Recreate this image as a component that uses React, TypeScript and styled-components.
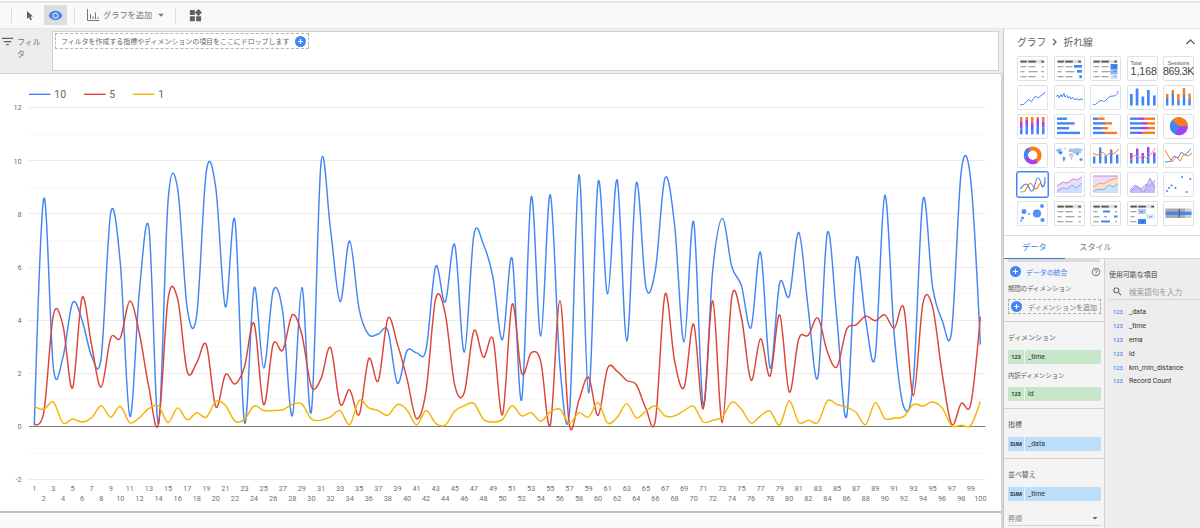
import { ReactNode } from "react";
import styled, { createGlobalStyle } from "styled-components";
import {
  MdArrowDropDown,
  MdFilterList,
  MdHelpOutline,
  MdRemoveRedEye,
  MdSearch,
  MdWidgets,
} from "react-icons/md";

const BLUE = "#4285f4";
const RED = "#db4437";
const YELLOW = "#f4b400";
const ORANGE = "#fa7b17";
const PURPLE = "#a142f4";

const GlobalStyle = createGlobalStyle`
  * {
    box-sizing: border-box;
  }
  body {
    margin: 0;
    background: #fafafa;
    font-family: Roboto, "Noto Sans CJK JP", sans-serif;
    color: #666;
    overflow: hidden;
  }
  svg {
    display: block;
  }
`;

const Page = styled.div`
  width: 1200px;
  height: 528px;
  display: flex;
  flex-direction: column;
  overflow: hidden;
`;

const Toolbar = styled.header`
  flex: none;
  height: 29px;
  padding-left: 11px;
  display: flex;
  align-items: center;
  background: #f9f9f9;
  border-bottom: 1px solid #e6e6e6;
  box-shadow: inset 0 1px #fff, inset 0 3px #e4e4e4;
`;

const ToolbarLine = styled.div`
  width: 1px;
  height: 15px;
  margin-top: 2px;
  background: #dcdcdc;
`;

const ToolButton = styled.div<{ $active?: boolean; $width: number; $left?: number }>`
  width: ${({ $width }) => $width}px;
  height: 20px;
  margin: 2px 0 0 ${({ $left }) => $left ?? 0}px;
  display: flex;
  align-items: center;
  justify-content: center;
  color: #616161;
  background: ${({ $active }) => ($active ? "#dedede" : "transparent")};
`;

const AddChart = styled.div`
  display: flex;
  align-items: center;
  width: 94px;
  margin-top: 2px;
  padding-left: 6px;
  color: #757575;
  font-size: 8.2px;
  white-space: nowrap;

  span {
    margin: -2px 2px 0 4px;
  }
`;

const Workspace = styled.div`
  flex: 1;
  min-height: 0;
  display: flex;
`;

const Canvas = styled.main`
  width: 1003px;
  flex: none;
  display: flex;
  flex-direction: column;
  background: linear-gradient(to right, transparent 1001px, #d6d6d6 1001px);
`;

const FilterBar = styled.div`
  flex: none;
  height: 45px;
  display: flex;
  padding: 2px 4px 2px 0;
  background: #ededed;
  border-bottom: 1px solid #d2d2d2;
`;

const FilterLabel = styled.div`
  width: 52px;
  display: flex;
  gap: 1px;
  padding-top: 4px;
  font-size: 8px;
  line-height: 12.4px;
  color: #757575;

  svg {
    flex: none;
    margin-top: -1px;
  }
  span {
    width: 26px;
    margin: 2px 0 0 1px;
    word-break: break-all;
  }
`;

const FilterArea = styled.div`
  flex: 1;
  background: #fff;
  border: 1px solid #d0d0d0;
  padding: 1px 2px;
`;

const DropZone = styled.div`
  width: 254px;
  height: 16px;
  padding: 0 2px 0 5px;
  display: flex;
  align-items: center;
  justify-content: space-between;
  border: 1px dashed #b4b4b4;
  font-size: 6.94px;
  color: #666;
  white-space: nowrap;
`;

const Sheet = styled.section`
  flex: none;
  height: 438px;
  margin: 1px 2px 0 0;
  background: #fff;
  border-bottom: 2px solid #c2c2c2;
`;

const Panel = styled.aside`
  flex: 1;
  min-width: 0;
  display: flex;
  flex-direction: column;
  background: #fff;
  border-left: 1px solid #c4c4c4;
`;

const PanelHeader = styled.div`
  flex: none;
  height: 27px;
  display: flex;
  align-items: center;
  gap: 6px;
  padding: 0 4px 2px 13px;
  font-size: 9.8px;
  color: #616161;

  svg:last-child {
    margin-left: auto;
  }
`;

const ChartPicker = styled.div`
  flex: none;
  height: 180px;
  display: grid;
  grid-template-columns: repeat(5, 31px);
  grid-auto-rows: 25px;
  column-gap: 5.5px;
  row-gap: 4.1px;
  padding-left: 13px;
  border-bottom: 1px solid #dcdcdc;
`;

const Tile = styled.div<{ $selected?: boolean }>`
  overflow: hidden;
  border-radius: 2px;
  box-shadow: ${({ $selected }) =>
    $selected ? `0 0 0 1px ${BLUE}, inset 0 0 0 0.5px ${BLUE}` : "inset 0 0 0 1px #dfe1e5"};
`;

const ScoreTile = styled(Tile)<{ $wide?: boolean }>`
  display: flex;
  flex-direction: column;
  align-items: ${({ $wide }) => ($wide ? "center" : "flex-start")};
  padding: 4px 0 0 ${({ $wide }) => ($wide ? 0 : 4)}px;
  font-family: "Liberation Sans", sans-serif;
  color: #555;
  white-space: nowrap;

  small {
    font-size: 5.3px;
    line-height: 6px;
  }
  b {
    font-size: 10.6px;
    line-height: 10px;
    font-weight: 400;
    letter-spacing: ${({ $wide }) => ($wide ? -0.45 : 0)}px;
    color: #444;
  }
`;

const Tabs = styled.div`
  flex: none;
  height: 23px;
  display: flex;
  border-bottom: 1px solid #d6d6d6;
`;

const Tab = styled.div<{ $active?: boolean }>`
  width: 61px;
  height: 23px;
  padding-bottom: 2px;
  display: flex;
  align-items: center;
  justify-content: center;
  font-size: 8.1px;
  color: ${({ $active }) => ($active ? "#3b78e7" : "#757575")};
  border-bottom: 1.5px solid ${({ $active }) => ($active ? "#3b78e7" : "transparent")};
`;

const PanelBody = styled.div`
  flex: 1;
  min-height: 0;
  display: flex;
`;

const Config = styled.div`
  width: 101px;
  flex: none;
  background: #f4f4f4;
  border-right: 1px solid #d2d2d2;
  overflow: hidden;
`;

const ClippedChip = styled.div`
  height: 3px;
  margin: 0 4px;
  background: #e0dbd9;
`;

const Section = styled.div<{ $height: number; $last?: boolean }>`
  height: ${({ $height }) => $height}px;
  padding: 0 3px 0 4px;
  border-bottom: ${({ $last }) => ($last ? "none" : "1px solid #d0d0d0")};
`;

const Label = styled.div<{ $height: number; $size?: number; $gap?: number }>`
  height: ${({ $height }) => $height}px;
  padding-bottom: ${({ $gap }) => $gap ?? 7}px;
  display: flex;
  align-items: flex-end;
  font-size: ${({ $size }) => $size ?? 6.9}px;
  line-height: 10px;
  color: #5c5c5c;
  white-space: nowrap;
`;

const BlendRow = styled.div`
  height: 19px;
  display: flex;
  align-items: center;
  gap: 5px;
  padding-left: 2px;
  font-size: 6.9px;
  color: #3b78e7;
  white-space: nowrap;

  > svg:last-child {
    margin-left: auto;
  }
`;

const AddDimension = styled.div`
  height: 15px;
  display: flex;
  align-items: center;
  gap: 6px;
  padding-left: 2px;
  border: 1px dashed #b0b0b0;
  font-size: 6.95px;
  color: #7a7a7a;
  white-space: nowrap;
`;

const FieldChip = styled.div<{ $color: string }>`
  height: 14px;
  display: flex;
  align-items: center;
  border-radius: 1px;
  background: ${({ $color }) => $color};
  color: #333;
  font-size: 7px;

  b {
    width: 17px;
    height: 14px;
    line-height: 14px;
    text-align: center;
    font-size: 5.6px;
    border-right: 1px solid #f4f4f4;
    margin-right: 3px;
  }
`;

const SelectRow = styled.div`
  height: 24px;
  margin: 0 3px 0 4px;
  padding-top: 8px;
  display: flex;
  justify-content: space-between;
  align-items: center;
  font-size: 7px;
  color: #888;
  border-bottom: 1px solid #d4d4d4;
`;

const Fields = styled.div`
  flex: 1;
  min-width: 0;
  background: #ededed;
  padding: 10px 0 0 4px;
`;

const FieldsTitle = styled.div`
  height: 12px;
  line-height: 12px;
  font-size: 6.95px;
  font-weight: 500;
  color: #666;
`;

const SearchBox = styled.div`
  height: 19px;
  display: flex;
  align-items: center;
  gap: 6px;
  padding: 3px 0 0 3px;
  border-bottom: 1px solid #d4d4d4;
  font-size: 7.6px;
  color: #9a9a9a;
  white-space: nowrap;
`;

const FieldList = styled.div`
  padding-top: 5px;
`;

const FieldRow = styled.div`
  height: 13.9px;
  display: flex;
  align-items: center;
  padding-left: 4px;
  font-size: 7px;
  color: #333;

  b {
    width: 16px;
    font-size: 5.7px;
    font-weight: 500;
    color: ${BLUE};
  }
`;

const AxisText = styled.text`
  font-size: 7.3px;
  fill: #707070;
`;

const LegendText = styled.text`
  font-size: 10.4px;
  fill: #666;
`;

const series = [
  {
    name: "10",
    color: BLUE,
    legendX: 29,
    values: [
      0.05, 8.58, 2.2, 2.6, 4.65, 4.0, 2.65, 2.6, 8.05, 6.15, 0.38, 5.1, 7.45, 0.1, 8.5, 8.95, 4.45, 4.2, 9.6, 8.95,
      4.5, 7.75, 0.15, 5.22, 2.2, 5.1, 4.3, 0.4, 5.23, 0.57, 9.9, 7.4, 4.7, 6.98, 4.4, 3.45, 3.48, 3.6, 1.63, 2.85,
      2.77, 2.9, 6.02, 4.68, 6.84, 2.8, 7.2, 6.85, 5.6, 3.27, 6.33, 1.0, 8.63, 3.4, 8.72, 2.3, 0.5, 9.47, 1.27, 9.2,
      4.98, 9.27, 3.22, 9.17, 5.25, 5.9, 9.35, 7.6, 3.18, 7.7, 0.8, 5.9, 7.83, 6.0, 5.3, 3.72, 6.55, 2.2, 5.4, 4.9,
      7.3, 4.4, 1.85, 7.3, 4.0, 0.37, 6.3, 4.0, 2.65, 8.7, 3.4, 0.72, 1.75, 8.55, 5.25, 4.0, 3.6, 9.6, 9.25, 3.08,
    ],
  },
  {
    name: "5",
    color: RED,
    legendX: 84,
    values: [
      0.1, 0.55, 4.2, 3.8, 1.45, 4.85, 3.05, 1.48, 3.33, 3.33, 4.72, 3.5, 1.45, 0.1, 4.8, 4.8, 2.07, 2.4, 3.07, 0.74,
      1.95, 1.6, 2.25, 3.88, 0.82, 3.1, 2.87, 4.2, 3.45, 1.5, 1.8, 2.97, 0.85, 1.38, 0.45, 2.55, 1.72, 4.07, 3.1, 1.8,
      0.3, 1.35, 4.8, 4.25, 1.55, 1.28, 3.6, 2.6, 3.3, 0.45, 4.6, 2.0, 2.77, 2.45, 0.05, 4.73, 0.05, 1.0, 1.85, 0.42,
      2.2, 2.07, 1.73, 1.57, 0.68, 0.25, 4.97, 2.48, 1.47, 3.85, 0.67, 4.73, 0.15, 4.9, 4.1, 1.74, 3.3, 1.9, 4.2, 1.3,
      3.3, 3.43, 4.08, 2.8, 2.25, 3.65, 3.82, 4.15, 3.98, 4.2, 3.7, 4.45, 1.17, 4.65, 4.5, 2.0, 0.08, 0.87, 0.85, 4.13,
    ],
  },
  {
    name: "1",
    color: YELLOW,
    legendX: 133,
    values: [
      0.77, 0.65, 0.92, 0.13, 0.28, 0.17, 0.33, 0.78, 0.35, 0.76, 0.14, 0.33, 0.68, 0.77, 0.15, 0.7, 0.25, 0.52, 0.35, 0.95,
      0.8, 0.2, 0.27, 0.77, 0.6, 0.6, 0.63, 0.83, 0.85, 0.28, 0.24, 0.36, 0.6, 0.07, 0.98, 0.7, 0.6, 0.42, 0.83, 0.62,
      0.06, 0.6, 0.12, 0.05, 0.58, 0.78, 0.87, 0.27, 0.17, 0.27, 0.78, 0.4, 0.52, 0.2, 0.55, 0.65, 0.12, 0.52, 0.35, 0.9,
      0.13, 0.35, 0.86, 0.33, 0.58, 0.77, 0.4, 0.4, 0.6, 0.76, 0.17, 0.24, 0.35, 0.92, 0.65, 0.13, 0.4, 0.58, 0.05, 0.97,
      0.15, 0.24, 0.15, 0.97, 0.83, 0.73, 0.53, 0.07, 0.9, 0.3, 0.32, 0.38, 0.83, 0.77, 0.92, 0.7, 0.03, 0.05, 0.05, 0.94,
    ],
  },
];

const chartX = (index: number) => 34.3 + index * 9.556;
const chartY = (value: number) => 351.5 - value * 26.58;

// cubic segments whose tangent at a point is parallel to its two neighbours
const smoothPath = (values: number[]) => {
  const last = values.length - 1;
  const slope = (i: number) =>
    i === 0 || i === last ? 0 : (chartY(values[i + 1]) - chartY(values[i - 1])) / 6;
  const handle = (i: number) => (i === 0 || i === last ? 0 : 9.556 / 3);

  return values.reduce((path, value, i) => {
    const x = chartX(i);
    const y = chartY(value);
    if (i === 0) return `M${x},${y}`;
    const c1 = `${chartX(i - 1) + handle(i - 1)},${chartY(values[i - 1]) + slope(i - 1)}`;
    const c2 = `${x - handle(i)},${y - slope(i)}`;
    return `${path}C${c1} ${c2} ${x},${y}`;
  }, "");
};

const gridValues = Array.from({ length: 15 }, (_, i) => 12 - i);

const LineChart = () => (
  <svg width="1001" height="436" viewBox="0 0 1001 436">
    {series.map(({ name, color, legendX }) => (
      <g key={name}>
        <line x1={legendX} x2={legendX + 21.5} y1={19.3} y2={19.3} stroke={color} strokeWidth={1.4} />
        <LegendText x={legendX + 25.3} y={22.9}>
          {name}
        </LegendText>
      </g>
    ))}
    {gridValues.map((value) => (
      <g key={value}>
        <line
          x1={29}
          x2={985.5}
          y1={Math.round(chartY(value) - 0.5) + 0.5}
          y2={Math.round(chartY(value) - 0.5) + 0.5}
          stroke={value === 0 ? "#7d7d7d" : value % 2 ? "#f8f8f8" : "#ebebeb"}
        />
        {value % 2 === 0 && (
          <AxisText x={21.7} y={chartY(value) + 2.8} textAnchor="end">
            {value}
          </AxisText>
        )}
      </g>
    ))}
    {series.map(({ name, color, values }) => (
      <path key={name} d={smoothPath(values)} fill="none" stroke={color} strokeWidth={1.45} />
    ))}
    {series[0].values.map((_, i) => (
      <AxisText key={i} x={chartX(i)} y={i % 2 ? 426 : 416} textAnchor="middle">
        {i + 1}
      </AxisText>
    ))}
  </svg>
);

const PlusIcon = ({ size = 11 }: { size?: number }) => (
  <svg width={size} height={size} viewBox="0 0 11 11">
    <circle cx="5.5" cy="5.5" r="5.5" fill={BLUE} />
    <path d="M5.5 3v5M3 5.5h5" stroke="#fff" strokeWidth="1.1" />
  </svg>
);

const Thumb = ({ children }: { children: ReactNode }) => (
  <svg width="31" height="25" viewBox="0 0 31 25" fill="none" strokeWidth="1">
    {children}
  </svg>
);

type Bar = [x: number, y: number, width: number, height: number, color: string];

const Bars = ({ items }: { items: Bar[] }) => (
  <>
    {items.map(([x, y, width, height, color], i) => (
      <rect key={i} x={x} y={y} width={width} height={height} fill={color} />
    ))}
  </>
);

const GREY = "#a6a6a6";
const tableHead: Bar[] = [
  [3, 3.7, 24.5, 3.6, "#e2e2e2"],
  [3.5, 4.7, 6.3, 1.8, "#555"],
  [11.3, 4.7, 7.5, 1.8, "#555"],
  [24.3, 4.7, 2.7, 1.8, "#555"],
];
const tableRows: Bar[] = [10, 15, 20].flatMap((y, i): Bar[] => [
  [3.5, y, i === 1 ? 4 : 6, 1.3, GREY],
  [11.5, y, i === 1 ? 9 : 7, 1.3, GREY],
]);
const rowEnds: Bar[] = [
  [24.8, 10, 2, 1.3, GREY],
  [24, 15, 3, 1.3, GREY],
  [24.8, 20, 2, 1.3, GREY],
];

const stackedColumns: Bar[] = [0, 1, 2, 3, 4].flatMap((i): Bar[] => {
  const top = [7.5, 6, 8.5, 5, 7.5][i];
  const split = [14.5, 12, 15, 11, 13.5][i];
  return [
    [3 + i * 5.5, 3, 2.5, top - 3, ORANGE],
    [3 + i * 5.5, top, 2.5, split - top, PURPLE],
    [3 + i * 5.5, split, 2.5, 20.3 - split, BLUE],
  ];
});

const comboColumns = [
  [3, 13.5],
  [9, 4.5],
  [14.5, 12.5],
  [20, 6.5],
  [26, 11.5],
];

const LineDots = ({ points, color = BLUE }: { points: string; color?: string }) => (
  <polyline points={points} stroke={color} strokeWidth="1" strokeLinejoin="round" />
);

const thumbs: ReactNode[] = [
  <Bars items={[...tableHead, ...tableRows, ...rowEnds]} />,
  <Bars
    items={[
      ...tableHead,
      ...tableRows,
      [20, 9, 8, 2.7, BLUE],
      [23, 14, 5, 2.7, BLUE],
      [25.3, 19.3, 2.7, 2.7, BLUE],
    ]}
  />,
  <Bars
    items={[
      ...tableHead,
      ...tableRows,
      [20.5, 8, 7, 5, BLUE],
      [20.5, 13, 7, 5, "#8ab4f8"],
      [20.5, 18, 7, 5, "#cfe0fc"],
      [24, 10, 2.5, 1, "#3369c4"],
      [24, 15, 2.5, 1, "#6088c8"],
      [24, 20, 2.5, 1, "#8da4cb"],
    ]}
  />,
  null,
  null,
  <LineDots points="3,20 7,19.3 11.5,14.5 14.5,16.5 18.5,11 21,13 28.5,7" />,
  <LineDots points="2,11.5 4,10 5,13 7,9.5 8,12 10,8.5 11,12 13,10.5 14,13 16,11.5 17,14 19,12.5 21,15 23,13.5 25,15 27,14 29,14.5" />,
  <path d="M3 20C7 20 8 15.5 11 15.5S13 18 16 15s4-4 7-4 4-1 5-5" stroke={BLUE} />,
  <Bars
    items={[
      [3, 9, 2.7, 11.5, BLUE],
      [8.7, 3.5, 2.7, 17, BLUE],
      [14.5, 11.5, 2.7, 9, BLUE],
      [20, 5, 2.7, 15.5, BLUE],
      [26, 10.5, 2.7, 10, BLUE],
    ]}
  />,
  <Bars
    items={[9, 5, 9, 3, 8.5].flatMap((y, i): Bar[] => {
      const split = [13, 9, 15, 10, 14][i];
      return [
        [3 + i * 5.6, y, 2.4, split - y, ORANGE],
        [3 + i * 5.6, split, 2.4, 20.5 - split, BLUE],
      ];
    })}
  />,
  <Bars items={stackedColumns} />,
  <Bars
    items={[
      [3, 3.5, 10, 2.4, BLUE],
      [3, 8.2, 17.5, 2.4, BLUE],
      [3, 13, 12, 2.4, BLUE],
      [3, 17.7, 23, 2.4, BLUE],
    ]}
  />,
  <Bars
    items={[
      [3, 3.5, 5.5, 2.4, BLUE],
      [8.5, 3.5, 6, 2.4, ORANGE],
      [3, 8.2, 12, 2.4, BLUE],
      [15, 8.2, 7, 2.4, ORANGE],
      [3, 13, 9, 2.4, BLUE],
      [12, 13, 6, 2.4, ORANGE],
      [3, 17.7, 12, 2.4, BLUE],
      [15, 17.7, 12, 2.4, ORANGE],
    ]}
  />,
  <Bars
    items={[[8, 14], [12, 17], [10, 18], [8, 12]].flatMap(([a, b], i): Bar[] => [
      [3, 3.5 + i * 4.7, a, 2.4, BLUE],
      [a + 3, 3.5 + i * 4.7, b - a, 2.4, PURPLE],
      [b + 3, 3.5 + i * 4.7, 25 - b, 2.4, ORANGE],
    ])}
  />,
  <>
    <circle cx="15.8" cy="12.2" r="9" fill={BLUE} />
    <path d="M15.8 12.2L9.5 5.8A9 9 0 0 1 24.8 12.2Z" fill={ORANGE} />
    <path d="M15.8 12.2h9A9 9 0 0 1 12.5 20.6Z" fill={PURPLE} />
  </>,
  <>
    <circle cx="15.7" cy="12.3" r="6.8" stroke={ORANGE} strokeWidth="4.2" />
    <path d="M12.2 6.4A6.8 6.8 0 0 0 9.6 15.3" stroke={BLUE} strokeWidth="4.2" />
    <path d="M9.6 15.3A6.8 6.8 0 0 0 19.5 17.9" stroke={PURPLE} strokeWidth="4.2" />
  </>,
  <>
    <path d="M1.5 7l3.5-1.5 3 .3L7 8l2 .5-1 1.5-3-.5L3 8.5Z" fill="#8fb8ee" />
    <path d="M4 8.5l4.5.5-1 2.5-2.500-.500Z" fill={BLUE} />
    <path d="M9.5 5l3-.5L11 7.500Z" fill="#c9d3df" />
    <path d="M9 13.5l2.5 1-.5 2L9.8 19 8.7 16Z" fill="#5b9bea" />
    <path d="M14.5 7.5l2-2.5 1.5 1v3h-3Z" fill="#9fc1ec" />
    <path d="M18 6l4-1 7.500 1-2 1.500-.5 3-2-.5-1 2-2-1.500-2 .5-2-2Z" fill="#a9c6ea" />
    <path d="M14.5 10.5l3.5-.5 2 2.5-1.500 1.500-.5 3h-1l-.5-3.500-1.500-.500Z" fill="#c3cfdd" />
    <path d="M22 9.500l3 .5-1 2.500-1.500-.500Z" fill="#5b9bea" />
    <path d="M25.500 15.500l2-.5 1.500 2-1.500 1-2-.500Z" fill="#5b9bea" />
  </>,
  <>
    <Bars items={comboColumns.map(([x, y]): Bar => [x, y, 2.4, 20.5 - y, BLUE])} />
    <LineDots color={ORANGE} points="3,10.5 7,12 12,9 16.5,12.5 21,9.5 24,11 29,6" />
  </>,
  <>
    <Bars
      items={[[3, 10, 15], [9, 5.5, 11], [14.5, 10, 16], [20, 4, 10], [26, 9.5, 14]].flatMap(([x, y, mid]): Bar[] => [
        [x, y, 2.5, mid - y, PURPLE],
        [x, mid, 2.5, 20.5 - mid, BLUE],
      ])}
    />
    <LineDots color="#f28b6b" points="3,17 8,12 12,15 16.5,12.5 20,16 24,11 28.5,5" />
  </>,
  <>
    <LineDots points="2,19 7,18.5 11,13 15,15 18.5,9 22,12.5 28,5.5" />
    <LineDots color={ORANGE} points="2,7 9,19 13,14 17,18 21,11 25,13 29,10.5" />
  </>,
  <>
    <path d="M3 20C9 20 8 19 10 15s4-5 6-1 4 4 6-1 3 4 5 0 1-2 1-3" stroke={ORANGE} strokeWidth="1.1" />
    <path d="M3 17C5 16 6 12 9 12s3 8 6 7 3-13 6-13 3 10 5 9 2-6 2-10" stroke={BLUE} strokeWidth="1.1" />
  </>,
  <>
    <path d="M3 14l6-4 4 1 6-4 4 1 5-3v16H3Z" fill="#ecdcf9" />
    <path d="M3 19l6-3 4 1 5-4 4 3 6-5v10H3Z" fill="#cfe0fc" />
    <LineDots color="#bd8ae8" points="3,14 9,10 13,11 19,7 23,8 28,5" />
    <LineDots color="#82aef3" points="3,19 9,16 13,17 18,13 22,16 28,11" />
  </>,
  <>
    <path d="M3 4h25v17H3Z" fill="#ecdcf9" />
    <path d="M3 15l7-4 4 1 6-4 8-2v15H3Z" fill="#fce0ca" />
    <path d="M3 19l6-2 4 1 6-5 4 2 5-3v9H3Z" fill="#cfe0fc" />
    <LineDots color="#bd8ae8" points="3,4 28,4" />
    <LineDots color="#f5a068" points="3,15 10,11 14,12 20,8 28,6" />
    <LineDots color="#82aef3" points="3,19 9,17 13,18 19,13 23,15 28,12" />
  </>,
  <>
    <path d="M3 20l7-6 4 3 5-5 3 2 6-6v13H3Z" fill="#cfe0fc" />
    <path d="M3 18l5-5 4 3 5 4 6-14 5 10v5H3Z" fill="#b685ed" fillOpacity="0.4" />
    <LineDots color="#82aef3" points="3,20 10,14 14,17 19,12 22,14 28,8" />
    <LineDots color="#bd8ae8" points="3,18 8,13 12,16 17,20 23,6 28,16" />
  </>,
  <g fill={BLUE}>
    <circle cx="4" cy="19" r="1" />
    <circle cx="6" cy="16" r="1" />
    <circle cx="8.5" cy="13.5" r="1" />
    <circle cx="12.5" cy="16" r="1" />
    <circle cx="19" cy="5" r="1.1" />
    <circle cx="27.3" cy="7" r="1.1" />
    <circle cx="23.7" cy="20" r="1.1" />
  </g>,
  <g fill={BLUE} fillOpacity="0.9">
    <circle cx="7" cy="10.5" r="2.5" />
    <circle cx="20" cy="12.5" r="4.1" />
    <circle cx="25" cy="5" r="2" />
    <circle cx="25.5" cy="19" r="2.1" />
    <circle cx="5.5" cy="17" r="1.5" />
    <circle cx="4" cy="19.7" r="1" />
    <circle cx="12" cy="13" r="1" />
  </g>,
  <Bars items={[...tableHead, ...tableRows, ...rowEnds]} />,
  <Bars
    items={[
      ...tableHead,
      [3.5, 10, 4, 1.3, GREY],
      [13, 9.5, 7, 2, BLUE],
      [25, 10, 2, 1.3, GREY],
      [3.5, 15, 6, 1.3, GREY],
      [14, 15, 3, 1.3, GREY],
      [24, 14.5, 3.5, 2, BLUE],
      [3.5, 20, 5, 1.3, GREY],
      [11, 19.5, 9, 2, BLUE],
      [25, 20, 2, 1.3, GREY],
    ]}
  />,
  <Bars
    items={[
      ...tableHead,
      [11, 8, 8, 5, "#aecbfa"],
      [19, 13, 8.5, 5, "#dbe8fd"],
      [11, 18, 8, 5, BLUE],
      [3.5, 10, 6, 1.3, GREY],
      [3.5, 15, 4, 1.3, GREY],
      [3.5, 20, 6, 1.3, GREY],
      [13, 10, 3, 1.3, "#7b8da8"],
      [22, 15, 3, 1.3, GREY],
      [14, 20, 3, 1.3, "#2b5fb8"],
    ]}
  />,
  <Bars
    items={[
      [2.5, 7.5, 19.5, 9.5, "#aaa"],
      [22, 7.5, 6.5, 9.5, "#d0d0d0"],
      [2.5, 10.7, 26, 3.2, BLUE],
      [15.7, 8, 1, 8.5, "#35517d"],
    ]}
  />,
];

const fields = ["_data", "_time", "ema", "id", "km_min_distance", "Record Count"];
const GREEN_CHIP = "#c8e6c9";
const BLUE_CHIP = "#bbdefb";

const App = () => (
  <>
    <GlobalStyle />
    <Page>
      <Toolbar>
        <ToolbarLine />
        <ToolButton $width={22} $left={7}>
          <svg width="8" height="11" viewBox="0 0 8 11">
            <path d="M1 1v8l2-1.7 1.4 3 1.5-.7-1.4-3h2.5Z" fill="#616161" />
          </svg>
        </ToolButton>
        <ToolButton $width={23} $left={3} $active>
          <MdRemoveRedEye size={15} color={BLUE} />
        </ToolButton>
        <ToolButton $width={14}>
          <ToolbarLine />
        </ToolButton>
        <AddChart>
          <svg width="12" height="12" viewBox="0 0 12 12" stroke="#757575" fill="none">
            <path d="M.5 0v11.5h11.5M3.5 5v5M6 7.5V10M8.5 3.5V10M11 8v2" />
          </svg>
          <span>グラフを追加</span>
          <MdArrowDropDown size={14} />
        </AddChart>
        <ToolbarLine />
        <ToolButton $width={20} $left={9}>
          <MdWidgets size={15} />
        </ToolButton>
      </Toolbar>
      <Workspace>
        <Canvas>
          <FilterBar>
            <FilterLabel>
              <MdFilterList size={15} color="#616161" />
              <span>フィルタ</span>
            </FilterLabel>
            <FilterArea>
              <DropZone>
                フィルタを作成する指標やディメンションの項目をここにドロップします
                <PlusIcon />
              </DropZone>
            </FilterArea>
          </FilterBar>
          <Sheet>
            <LineChart />
          </Sheet>
        </Canvas>
        <Panel>
          <PanelHeader>
            <span>グラフ</span>
            <svg width="5" height="8" viewBox="0 0 5 8" fill="none">
              <path d="M1 1l3 3-3 3" stroke="#66664e" strokeWidth="1.3" />
            </svg>
            <span>折れ線</span>
            <svg width="11" height="8" viewBox="0 0 11 8" fill="none">
              <path d="M1.5 6l4-4 4 4" stroke="#616161" strokeWidth="1.3" />
            </svg>
          </PanelHeader>
          <ChartPicker>
            {thumbs.map((thumb, i) => {
              if (i === 3) {
                return (
                  <ScoreTile key={i}>
                    <small>Total</small>
                    <b>1,168</b>
                  </ScoreTile>
                );
              }
              if (i === 4) {
                return (
                  <ScoreTile key={i} $wide>
                    <small>Sessions</small>
                    <b>869.3K</b>
                  </ScoreTile>
                );
              }
              return (
                <Tile key={i} $selected={i === 20}>
                  <Thumb>{thumb}</Thumb>
                </Tile>
              );
            })}
          </ChartPicker>
          <Tabs>
            <Tab $active>データ</Tab>
            <Tab>スタイル</Tab>
          </Tabs>
          <PanelBody>
            <Config>
              <ClippedChip />
              <Section $height={60}>
                <BlendRow>
                  <PlusIcon />
                  データの統合
                  <MdHelpOutline size={10} color="#757575" />
                </BlendRow>
                <Label $height={18} $size={6.4} $gap={5}>
                  期間のディメンション
                </Label>
                <AddDimension>
                  <PlusIcon />
                  ディメンションを追加
                </AddDimension>
              </Section>
              <Section $height={87}>
                <Label $height={28}>ディメンション</Label>
                <FieldChip $color={GREEN_CHIP}>
                  <b>123</b>_time
                </FieldChip>
                <Label $height={23} $size={6.3} $gap={6}>
                  内訳ディメンション
                </Label>
                <FieldChip $color={GREEN_CHIP}>
                  <b>123</b>id
                </FieldChip>
              </Section>
              <Section $height={50}>
                <Label $height={28}>指標</Label>
                <FieldChip $color={BLUE_CHIP}>
                  <b>SUM</b>_data
                </FieldChip>
              </Section>
              <Section $height={43} $last>
                <Label $height={28}>並べ替え</Label>
                <FieldChip $color={BLUE_CHIP}>
                  <b>SUM</b>_time
                </FieldChip>
              </Section>
              <SelectRow>
                昇順
                <MdArrowDropDown size={12} color="#616161" />
              </SelectRow>
            </Config>
            <Fields>
              <FieldsTitle>使用可能な項目</FieldsTitle>
              <SearchBox>
                <MdSearch size={11} color="#555" />
                検索語句を入力
              </SearchBox>
              <FieldList>
                {fields.map((field) => (
                  <FieldRow key={field}>
                    <b>123</b>
                    {field}
                  </FieldRow>
                ))}
              </FieldList>
            </Fields>
          </PanelBody>
        </Panel>
      </Workspace>
    </Page>
  </>
);

export default App;
